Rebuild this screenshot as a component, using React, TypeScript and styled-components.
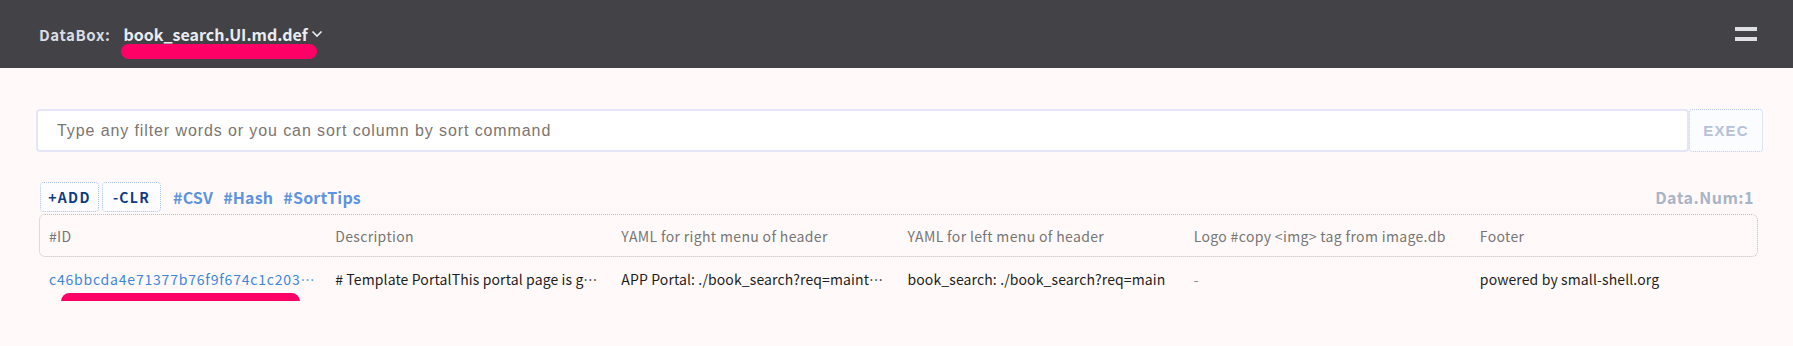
import React from 'react';
import styled, { createGlobalStyle } from 'styled-components';

const GlobalStyle = createGlobalStyle`
  html, body {
    margin: 0;
    padding: 0;
    background: #fffaf9;
    font-family: "Noto Sans CJK JP", "Noto Sans", sans-serif;
  }
`;

const Header = styled.header`
  height: 68px;
  background: #434247;
  display: flex;
  align-items: center;
  justify-content: space-between;
  padding: 0 36px 0 39px;
  box-sizing: border-box;
`;

const Brand = styled.div`
  display: flex;
  align-items: center;
  gap: 13px;
`;

const BrandLabel = styled.span`
  color: #d9dde4;
  font-size: 15px;
  font-weight: 700;
  letter-spacing: 0.6px;
`;

const BoxSelect = styled.div`
  position: relative;
  display: flex;
  align-items: center;
  gap: 3px;
  color: #e9edf2;
  font-size: 16px;
  font-weight: 700;
`;

const Redaction = styled.span<{ left: number; top: number; width: number; height: number }>`
  position: absolute;
  display: block;
  left: ${p => p.left}px;
  top: ${p => p.top}px;
  width: ${p => p.width}px;
  height: ${p => p.height}px;
  background: #ff0066;
  border-radius: ${p => p.height / 2}px;
  pointer-events: none;
`;

const Burger = styled.button`
  display: flex;
  flex-direction: column;
  gap: 6px;
  padding: 0;
  border: none;
  background: none;
  span {
    display: block;
    width: 22px;
    height: 4px;
    background: #dedfe0;
  }
`;

const Main = styled.main`
  padding: 41px 30px 0 36px;
`;

const SearchRow = styled.div`
  display: flex;
  height: 43px;
`;

const SearchInput = styled.input`
  flex: 1;
  border: 2px solid #e4e6f7;
  border-radius: 4px;
  background: #fff;
  padding: 0 19px;
  font-family: "Liberation Sans", Arial, sans-serif;
  font-size: 16px;
  letter-spacing: 0.9px;
  color: #333;
  outline: none;
  &::placeholder {
    color: #7b7670;
  }
`;

const ExecButton = styled.button`
  width: 74px;
  border: 1px dotted #b9cdf2;
  border-radius: 3px;
  background: #fbfcff;
  color: #b4c2d8;
  font-family: "Liberation Sans", Arial, sans-serif;
  font-size: 15px;
  font-weight: 700;
  letter-spacing: 1.2px;
`;

const Toolbar = styled.div`
  display: flex;
  align-items: center;
  margin-top: 30px;
  padding: 0 9px 0 4px;
  height: 30px;
`;

const ToolButton = styled.button`
  height: 30px;
  width: 59px;
  padding: 0;
  margin-right: 3px;
  border: 1px dotted #a9c3ee;
  border-radius: 4px;
  background: #fdfdff;
  color: #0e3c82;
  font-family: "Noto Sans CJK JP", "Noto Sans", sans-serif;
  font-size: 14px;
  font-weight: 700;
  letter-spacing: 1.3px;
`;

const Tags = styled.div`
  display: flex;
  gap: 10px;
  margin-left: 9px;
`;

const TagLink = styled.a`
  color: #5d93e0;
  font-size: 16px;
  font-weight: 700;
  text-decoration: none;
  letter-spacing: 0.2px;
`;

const Count = styled.span`
  margin-left: auto;
  color: #a9b4c6;
  font-size: 16px;
  font-weight: 700;
  letter-spacing: 0.5px;
`;

const Table = styled.div`
  margin: 2px 5px 0 3px;
`;

const Row = styled.div<{ head?: boolean }>`
  display: grid;
  grid-template-columns: repeat(6, minmax(0, 1fr));
  align-items: center;
  height: ${p => (p.head ? '43px' : '44px')};
  border: ${p => (p.head ? '1px dotted #bdbdbd' : '1px solid transparent')};
  border-radius: 6px;
  box-sizing: border-box;
`;

const Cell = styled.div<{ head?: boolean; link?: boolean; muted?: boolean }>`
  position: relative;
  padding: 0 9px;
  font-size: 14px;
  white-space: nowrap;
  overflow: hidden;
  text-overflow: ellipsis;
  color: ${p => (p.head ? '#767676' : p.link ? '#3d86dc' : p.muted ? '#888' : '#1e1e1e')};
  letter-spacing: ${p => (p.head ? '0.35px' : p.link ? '0.8px' : '0.12px')};
`;

const IdCell = styled.div`
  position: relative;
  min-width: 0;
`;

const columns = [
  '#ID',
  'Description',
  'YAML for right menu of header',
  'YAML for left menu of header',
  'Logo #copy <img> tag from image.db',
  'Footer',
];

const App: React.FC = () => (
  <>
    <GlobalStyle />
    <Header>
      <Brand>
        <BrandLabel>DataBox:</BrandLabel>
        <BoxSelect>
          book_search.UI.md.def
          <svg width="12" height="8" viewBox="0 0 12 8">
            <path d="M1.5 1.5 L6 6 L10.5 1.5" fill="none" stroke="#e9edf2" strokeWidth="1.6" />
          </svg>
          <Redaction left={-2} top={22} width={196} height={15} />
        </BoxSelect>
      </Brand>
      <Burger aria-label="menu">
        <span />
        <span />
      </Burger>
    </Header>
    <Main>
      <SearchRow>
        <SearchInput placeholder="Type any filter words or you can sort column by sort command" />
        <ExecButton>EXEC</ExecButton>
      </SearchRow>
      <Toolbar>
        <ToolButton>+ADD</ToolButton>
        <ToolButton>-CLR</ToolButton>
        <Tags>
          <TagLink href="#">#CSV</TagLink>
          <TagLink href="#">#Hash</TagLink>
          <TagLink href="#">#SortTips</TagLink>
        </Tags>
        <Count>Data.Num:1</Count>
      </Toolbar>
      <Table>
        <Row head>
          {columns.map(c => (
            <Cell head key={c}>{c}</Cell>
          ))}
        </Row>
        <Row>
          <IdCell>
            <Cell link>c46bbcda4e71377b76f9f674c1c2038a91d3</Cell>
            <Redaction left={21} top={24} width={239} height={17} />
          </IdCell>
          <Cell># Template PortalThis portal page is generated from markdown</Cell>
          <Cell>APP Portal: ./book_search?req=maintenance</Cell>
          <Cell>book_search: ./book_search?req=main</Cell>
          <Cell muted>-</Cell>
          <Cell>powered by small-shell.org</Cell>
        </Row>
      </Table>
    </Main>
  </>
);

export default App;
